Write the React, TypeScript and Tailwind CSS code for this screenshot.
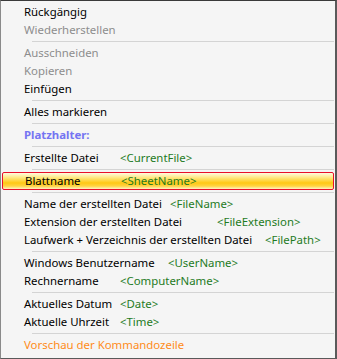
import React from "react";

type Item =
  | { kind: "sep" }
  | {
      kind: "item";
      label: string;
      tone?: "normal" | "disabled" | "header" | "orange";
      token?: string;
      labelWidth?: string;
      active?: boolean;
    };

const items: Item[] = [
  { kind: "item", label: "Rückgängig" },
  { kind: "item", label: "Wiederherstellen", tone: "disabled" },
  { kind: "sep" },
  { kind: "item", label: "Ausschneiden", tone: "disabled" },
  { kind: "item", label: "Kopieren", tone: "disabled" },
  { kind: "item", label: "Einfügen" },
  { kind: "sep" },
  { kind: "item", label: "Alles markieren" },
  { kind: "sep" },
  { kind: "item", label: "Platzhalter:", tone: "header" },
  { kind: "sep" },
  { kind: "item", label: "Erstellte Datei", token: "<CurrentFile>", labelWidth: "w-[96px]" },
  { kind: "sep" },
  { kind: "item", label: "Blattname", token: "<SheetName>", labelWidth: "w-[96px]", active: true },
  { kind: "sep" },
  { kind: "item", label: "Name der erstellten Datei", token: "<FileName>", labelWidth: "w-[146px]" },
  { kind: "item", label: "Extension der erstellten Datei", token: "<FileExtension>", labelWidth: "w-[193px]" },
  { kind: "item", label: "Laufwerk + Verzeichnis der erstellten Datei", token: "<FilePath>", labelWidth: "w-[241px]" },
  { kind: "sep" },
  { kind: "item", label: "Windows Benutzername", token: "<UserName>", labelWidth: "w-[144px]" },
  { kind: "item", label: "Rechnername", token: "<ComputerName>", labelWidth: "w-[96px]" },
  { kind: "sep" },
  { kind: "item", label: "Aktuelles Datum", token: "<Date>", labelWidth: "w-[96px]" },
  { kind: "item", label: "Aktuelle Uhrzeit", token: "<Time>", labelWidth: "w-[96px]" },
  { kind: "sep" },
  { kind: "item", label: "Vorschau der Kommandozeile", tone: "orange" },
];

const toneClass = {
  normal: "text-[#000000]",
  disabled: "text-[#8d8d8d]",
  header: "text-[#7474f2] font-bold",
  orange: "text-[#ff8c1a]",
};

export default function App() {
  return (
    <div
      className="w-[337px] h-[359px] bg-[#f5f5f5] border-l border-t border-b border-r-2 border-l-[#8a8a8a] border-t-[#3a3a3a] border-b-[#5a5a5a] border-r-[#5a5a5a] pt-[2px] text-[11.4px] leading-[18px]"
      style={{ fontFamily: '"Segoe UI", "Noto Sans", "Open Sans", sans-serif' }}
    >
      {items.map((it, i) => {
        if (it.kind === "sep") {
          return (
            <div key={i} className="h-[5px] pt-[2px] pl-[31px] pr-[1px]">
              <div className="h-px bg-[#d4d4d4]" />
            </div>
          );
        }
        const tone = toneClass[it.tone ?? "normal"];
        return (
          <div
            key={i}
            className={
              it.active
                ? "mx-[1px] h-[18px] flex items-center pl-[22px] border border-[#e8102a] rounded-[2px] bg-[linear-gradient(to_bottom,#fffbe0_0%,#ffe77f_30%,#ffc814_62%,#ffd445_82%,#fff3c4_100%)]"
                : "h-[18px] flex items-center pl-[23px]"
            }
          >
            <span className={`${it.labelWidth ?? ""} ${tone} whitespace-nowrap`}>{it.label}</span>
            {it.token && <span className="text-[#1e7b1e] whitespace-nowrap">{it.token}</span>}
          </div>
        );
      })}
    </div>
  );
}
